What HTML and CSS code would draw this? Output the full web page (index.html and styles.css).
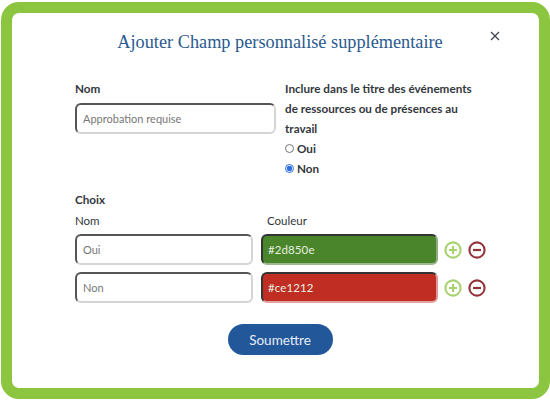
FILE: index.html
```html
<!DOCTYPE html>
<html lang="fr">
<head>
    <meta charset="UTF-8">
    <meta name="viewport" content="width=device-width, initial-scale=1.0">
    <title>Ajouter Champ</title>
    <link rel="stylesheet" href="styles.css">
</head>
<body>

<div class="modal">
    <button class="close-button" aria-label="Fermer">
        <svg width="10" height="10" viewBox="0 0 10 10"><path d="M1 1L9 9M9 1L1 9" stroke="#3c4650" stroke-width="1.3" fill="none"/></svg>
    </button>
    <h1 class="modal-title">Ajouter Champ personnalisé supplémentaire</h1>

    <div class="top-row">
        <div class="name-field">
            <label class="field-label">Nom</label>
            <input class="text-input" type="text" value="Approbation requise">
        </div>
        <div class="include-field">
            <div class="field-label include-label">Inclure dans le titre des événements de ressources ou de présences au travail</div>
            <label class="radio-line"><input type="radio" name="include"> Oui</label>
            <label class="radio-line"><input type="radio" name="include" checked> Non</label>
        </div>
    </div>

    <div class="field-label choices-label">Choix</div>
    <div class="choice-head">
        <span class="name-head">Nom</span>
        <span>Couleur</span>
    </div>

    <div class="choice-row">
        <input class="text-input" type="text" value="Oui">
        <input class="text-input color-input green" type="text" value="#2d850e">
        <div class="row-icons">
            <svg width="18" height="18" viewBox="0 0 18 18"><circle cx="9" cy="9" r="7.6" stroke="#a5d16f" stroke-width="2.1" fill="none"/><path d="M9 5v8M5 9h8" stroke="#a5d16f" stroke-width="2"/></svg>
            <svg width="18" height="18" viewBox="0 0 18 18"><circle cx="9" cy="9" r="7.6" stroke="#93333a" stroke-width="2.1" fill="none"/><path d="M5 9h8" stroke="#93333a" stroke-width="2.2"/></svg>
        </div>
    </div>
    <div class="choice-row">
        <input class="text-input" type="text" value="Non">
        <input class="text-input color-input red" type="text" value="#ce1212">
        <div class="row-icons">
            <svg width="18" height="18" viewBox="0 0 18 18"><circle cx="9" cy="9" r="7.6" stroke="#a5d16f" stroke-width="2.1" fill="none"/><path d="M9 5v8M5 9h8" stroke="#a5d16f" stroke-width="2"/></svg>
            <svg width="18" height="18" viewBox="0 0 18 18"><circle cx="9" cy="9" r="7.6" stroke="#93333a" stroke-width="2.1" fill="none"/><path d="M5 9h8" stroke="#93333a" stroke-width="2.2"/></svg>
        </div>
    </div>

    <div class="submit-row">
        <button class="submit-button">Soumettre</button>
    </div>
</div>

</body>
</html>
```

FILE: styles.css
```css
body {
    font-family: Lato, Arial, sans-serif;
    margin: 0;
    padding: 2px 0 1px 1px;
    background: #fff;
    color: #33373c;
}

.modal {
    box-sizing: border-box;
    height: 397px;
    border: 11px solid #8cc540;
    border-radius: 18px;
    background: #fff;
    padding: 0 54px 0 63px;
    position: relative;
}

.close-button {
    position: absolute;
    top: 18px;
    right: 39px;
    width: 10px;
    height: 10px;
    padding: 0;
    border: none;
    background: none;
    display: flex;
}

.modal-title {
    margin: 0;
    padding-top: 18px;
    height: 40px;
    font-family: "Liberation Serif", serif;
    font-size: 18.3px;
    font-weight: normal;
    line-height: 23px;
    color: #2a5a8f;
    text-align: center;
}

.top-row {
    display: flex;
    gap: 9px;
    margin-top: 7px;
}

.name-field {
    flex: none;
    width: 201px;
}

.include-field {
    width: 190px;
}

.field-label {
    font-size: 11.7px;
    font-weight: bold;
    line-height: 20px;
}

.name-field .field-label {
    display: block;
    margin-bottom: 5px;
}

.radio-line {
    display: flex;
    align-items: center;
    gap: 3px;
    font-size: 11.7px;
    font-weight: bold;
    line-height: 20px;
}

.radio-line input {
    width: 9px;
    height: 9px;
    margin: 0;
    accent-color: #2f6fe0;
}

.text-input {
    box-sizing: border-box;
    display: block;
    width: 100%;
    height: 31px;
    padding: 0 6px;
    border: 2px solid;
    border-color: #555 #d5d5d5 #d5d5d5 #555;
    border-radius: 6px;
    font-family: Lato, Arial, sans-serif;
    font-size: 11px;
    color: #777;
    background: #fff;
}

.choices-label {
    margin-top: 11px;
}

.choice-head {
    display: flex;
    font-size: 11.5px;
    line-height: 20px;
    margin-top: 2px;
}

.name-head {
    width: 192px;
}

.choice-row {
    display: flex;
    align-items: center;
    gap: 8px;
    margin-top: 3px;
}

.choice-row .text-input {
    flex: none;
    width: 178px;
}

.choice-row .color-input {
    width: 177px;
}

.choice-row + .choice-row {
    margin-top: 7px;
}

.color-input {
    color: #e6efe0;
    font-size: 11.5px;
    padding: 0 5px;
    letter-spacing: 0.1px;
}

.green {
    background: #4a852b;
    border-color: #333 #8fae7e #9db890 #333;
}

.red {
    background: #bf2d23;
    border-color: #333 #d99 #e0a5a0 #333;
}

.row-icons {
    display: flex;
    gap: 6px;
    margin-left: -2px;
}

.submit-row {
    display: flex;
    justify-content: center;
    margin-top: 21px;
}

.submit-button {
    width: 105px;
    height: 31px;
    border: none;
    border-radius: 16px;
    background: #22589a;
    color: #e8eef6;
    font-family: Lato, Arial, sans-serif;
    font-size: 13.5px;
}
```
